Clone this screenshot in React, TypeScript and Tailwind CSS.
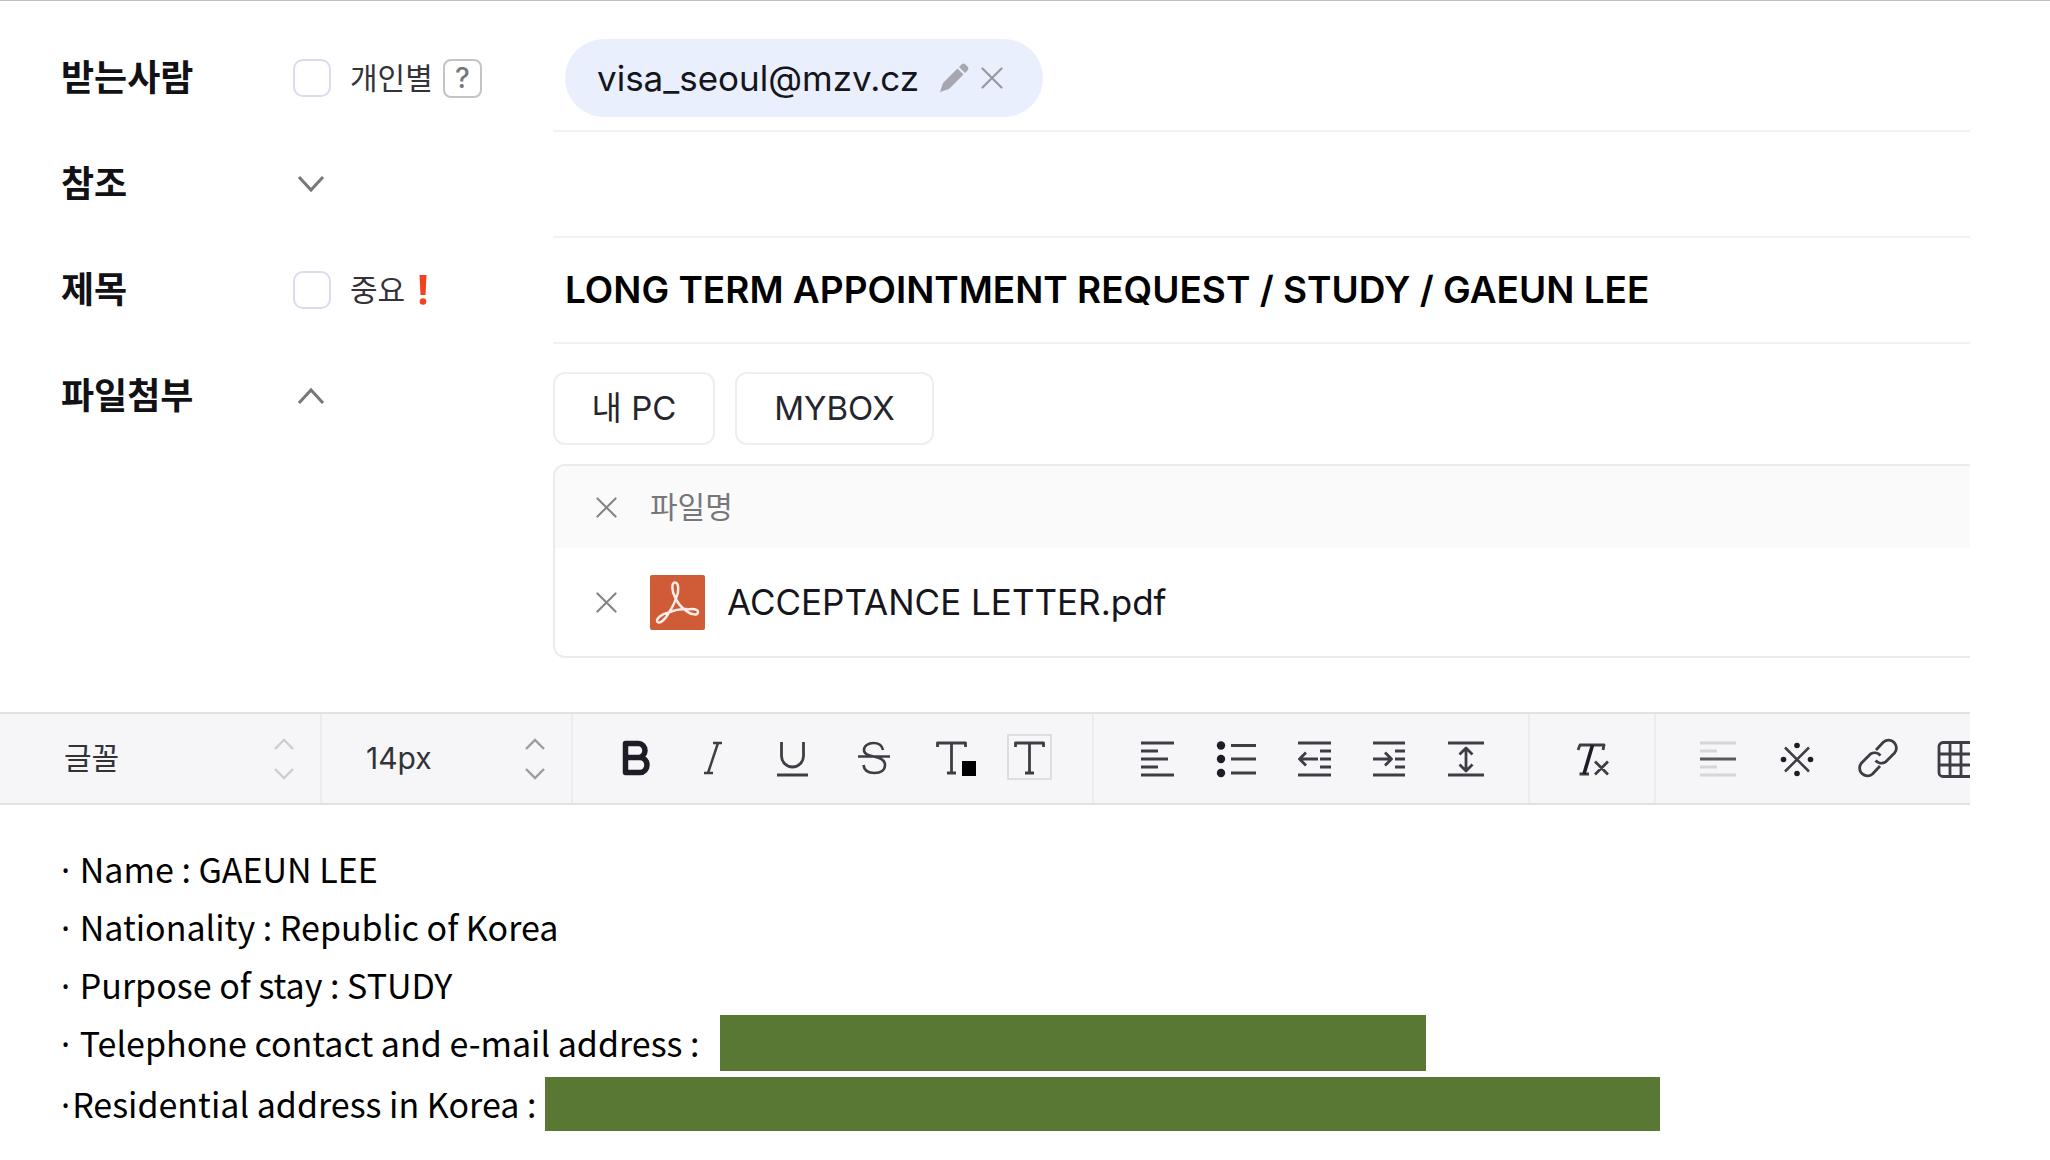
import type { ReactNode } from "react"

const ICON = "#3d3d46"

function ToolIcon({ label, children }: { label: string; children: ReactNode }) {
  return (
    <button type="button" aria-label={label} className="shrink-0">
      <svg
        width="56"
        height="44"
        viewBox="0 0 56 44"
        fill="none"
        stroke={ICON}
        strokeWidth="2.8"
        strokeLinejoin="round"
        className="block overflow-visible"
      >
        {children}
      </svg>
    </button>
  )
}

function Close({ size, color }: { size: number; color: string }) {
  return (
    <svg width={size} height={size} viewBox="0 0 22 22" fill="none" stroke={color} strokeWidth="2.2" strokeLinecap="round">
      <path d="M1.5 1.5l19 19M20.5 1.5l-19 19" />
    </svg>
  )
}

function Chevron({ up = false }: { up?: boolean }) {
  return (
    <svg width="28" height="18" viewBox="0 0 28 18" fill="none" stroke="#77777a" strokeWidth="3">
      <path d={up ? "M2 16L14 3l12 13" : "M2 2l12 13L26 2"} />
    </svg>
  )
}

function Spinner({ color }: { color: string }) {
  return (
    <svg width="20" height="42" viewBox="0 0 20 42" fill="none" stroke={color} strokeWidth="2.4" className="pointer-events-none">
      <path d="M1 11l9-9 9 9M1 31l9 9 9-9" />
    </svg>
  )
}

function Row({ label, htmlFor, option, children }: { label: string; htmlFor?: string; option: ReactNode; children?: ReactNode }) {
  return (
    <div className="grid h-[106px] grid-cols-[232px_260px_1fr]">
      <label htmlFor={htmlFor} className="flex items-center pb-0.5 text-4xl font-bold text-[#111116]">
        {label}
      </label>
      <div className="flex items-center pb-0.5">{option}</div>
      <div className="flex items-center border-b-2 border-[#f1f1f2] pl-3">{children}</div>
    </div>
  )
}

function Check({ id, label }: { id: string; label: string }) {
  return (
    <label htmlFor={id} className="flex items-center gap-[19px] text-[30px] text-[#333339]">
      <input id={id} type="checkbox" className="size-[38px] appearance-none rounded-[10px] border-2 border-[#d9dcec] bg-white" />
      {label}
    </label>
  )
}

function Line({ text }: { text: string }) {
  return (
    <p className="shrink-0 whitespace-pre">
      <span className="mr-0.5 font-['Noto_Sans',sans-serif] leading-none">·</span>
      {text}
    </p>
  )
}

const lines = [" Name : GAEUN LEE", " Nationality : Republic of Korea", " Purpose of stay : STUDY"]

export default function App() {
  return (
    <div className="min-h-screen border-t border-[#bdbdbf] bg-white font-['Inter','Noto_Sans_CJK_KR',sans-serif]">
      <main className="mr-20 overflow-hidden pt-[25px]">
        <form className="pl-[61px]">
          <Row
            label="받는사람"
            htmlFor="to"
            option={
              <>
                <Check id="each" label="개인별" />
                <button type="button" className="ml-2.5 size-[39px] rounded-lg border-2 border-[#c4c4c6] text-[28px] leading-none font-medium text-[#77777a]">
                  ?
                </button>
              </>
            }
          >
            <div className="flex h-[78px] items-center rounded-full bg-[#e9effc] pr-10 pl-8">
              <span className="text-[35px] text-[#15151b]">visa_seoul@mzv.cz</span>
              <button type="button" aria-label="수정" className="ml-5">
                <svg width="30" height="30" viewBox="0 0 30 30" fill="#a6a8ad">
                  <path d="M1 29l3-9L18.500 5.500l6 6L10 26z" />
                  <path d="M20 4l2.500-2.500a3 3 0 0 1 4 0l2 2a3 3 0 0 1 0 4L26 10z" />
                </svg>
              </button>
              <button type="button" aria-label="삭제" className="ml-3">
                <Close size={22} color="#98999e" />
              </button>
            </div>
            <input id="to" className="min-w-0 flex-1 outline-none" />
          </Row>

          <Row
            label="참조"
            htmlFor="cc"
            option={
              <button type="button" aria-label="펼치기" className="ml-1">
                <Chevron />
              </button>
            }
          >
            <input id="cc" className="w-full text-[35px] outline-none" />
          </Row>

          <Row
            label="제목"
            htmlFor="subject"
            option={
              <>
                <Check id="important" label="중요" />
                <svg width="8" height="30" viewBox="0 0 8 30" fill="#f0431e" className="ml-3.5">
                  <path d="M0.500 0h7l-1 20h-5z" />
                  <circle cx="4" cy="26.500" r="3.300" />
                </svg>
              </>
            }
          >
            <input
              id="subject"
              defaultValue="LONG TERM APPOINTMENT REQUEST / STUDY / GAEUN LEE"
              className="w-full text-[37px] font-semibold text-black outline-none"
            />
          </Row>

          <div className="grid grid-cols-[232px_260px_1fr]">
            <span className="flex h-[106px] items-center pb-0.5 text-4xl font-bold text-[#111116]">파일첨부</span>
            <div className="flex h-[106px] items-center pb-0.5">
              <button type="button" aria-label="접기" className="ml-1">
                <Chevron up />
              </button>
            </div>
            <div className="pt-7">
              <div className="flex gap-5 text-[33px] text-[#25252e]">
                <button type="button" className="h-[73px] w-[162px] rounded-xl border-2 border-[#eeeeef]">
                  내 PC
                </button>
                <button type="button" className="h-[73px] w-[199px] rounded-xl border-2 border-[#eeeeef]">
                  MYBOX
                </button>
              </div>
              <table className="mt-[19px] block overflow-hidden rounded-l-xl border-2 border-r-0 border-[#ebebee]">
                <thead className="block bg-[#fafafa]">
                  <tr className="flex h-[82px] items-center pl-[41px]">
                    <th className="w-[54px] text-left">
                      <button type="button" aria-label="모두 삭제" className="block">
                        <Close size={21} color="#858588" />
                      </button>
                    </th>
                    <th className="text-[30px] font-normal text-[#77777a]">파일명</th>
                  </tr>
                </thead>
                <tbody className="block">
                  <tr className="flex h-[108px] items-center pl-[41px]">
                    <td className="w-[54px]">
                      <button type="button" aria-label="파일 삭제" className="block">
                        <Close size={21} color="#858588" />
                      </button>
                    </td>
                    <td className="flex items-center gap-[22px] text-[35px] text-[#15151b]">
                      <svg width="55" height="55" viewBox="0 0 55 55" fill="none" stroke="#fbeee8" strokeWidth="2.500">
                        <rect width="55" height="55" rx="2" fill="#cf5c36" stroke="none" />
                        {/* three loops joined by a thin triangle */}
                        <path
                          d="M25 22c-3-5-4-14.500 0-14.500s4 9.500 1.500 14.500c-1.500 5-4 10-7.500 15.500M25 22c2.500 6.500 7 11 12 14.500M19 37.500c4-2 11-3.500 18-3.500M19 37.500c-3 6-8.500 11.500-11.500 9.500-2.500-2.500 4-8.500 11.500-9.500zM37 34.500c5-1 11-.5 11 2.500 0 4-7 2.500-11-.5z"
                          strokeLinejoin="round"
                        />
                      </svg>
                      ACCEPTANCE LETTER.pdf
                    </td>
                  </tr>
                </tbody>
              </table>
            </div>
          </div>
        </form>

        <div className="mt-[54px] flex h-[93px] border-y-2 border-[#e2e2e5] bg-[#f6f6f9] text-[#333337]">
          <label className="flex w-[322px] shrink-0 items-center border-r-2 border-[#ececef] pr-[26px] pl-16">
            <select aria-label="글꼴" className="flex-1 appearance-none text-[30px] outline-none">
              <option>글꼴</option>
            </select>
            <Spinner color="#cdcdd0" />
          </label>
          <label className="flex w-[251px] shrink-0 items-center border-r-2 border-[#ececef] pr-[26px] pl-11">
            <select aria-label="글자 크기" className="flex-1 appearance-none text-[30px] outline-none">
              <option>14px</option>
            </select>
            <Spinner color="#9c9ca0" />
          </label>

          <div className="flex shrink-0 items-center gap-[22px] border-r-2 border-[#ececef] pr-[38px] pl-[35px]">
            <ToolIcon label="굵게">
              <path stroke="#1d1d28" strokeWidth="5.500" d="M17.500 6.500h13a6.500 7 0 0 1 0 14h-13zM17.500 20.500h14.500a7 7.500 0 0 1 0 15h-14.500z" />
            </ToolIcon>
            <ToolIcon label="기울임">
              <path strokeWidth="2.500" d="M27 6h9M18 36h9M32 6L22 36" />
            </ToolIcon>
            <ToolIcon label="밑줄">
              <path d="M17.500 5v14a11 11 0 0 0 22 0V5M13 38h31" />
            </ToolIcon>
            <ToolIcon label="취소선">
              <path d="M41 13c-1-5-5-7-9.500-7-5.500 0-9.500 3-9.500 7 0 9 21 4 21 15 0 5-4 8-10.500 8S22 33 21.500 28M16 19.500h32" strokeWidth="2.600" />
            </ToolIcon>
            <ToolIcon label="글자색">
              <path d="M17.500 10V6h28v4M31.500 6v30M27 36h9" />
              <rect x="42" y="24" width="14" height="15" fill="#000" stroke="none" />
            </ToolIcon>
            <ToolIcon label="배경색">
              <rect x="10" y="-2" width="43" height="44" stroke="#dedee1" strokeWidth="2" />
              <path d="M17.500 10V6h28v4M31.500 6v30M27 36h9" />
            </ToolIcon>
          </div>

          <div className="flex shrink-0 items-center gap-[22px] border-r-2 border-[#ececef] pr-[30px] pl-9">
            <ToolIcon label="정렬">
              <path d="M11 6h33M11 14h17M11 22h27M11 30h17M11 38h33" />
            </ToolIcon>
            <ToolIcon label="목록">
              <path d="M23 8.500h25M23 22h25M23 36h25" />
              <g fill="#1d1d28" stroke="none">
                <circle cx="13" cy="8.500" r="4.200" />
                <circle cx="13" cy="22" r="4.200" />
                <circle cx="13" cy="36" r="4.200" />
              </g>
            </ToolIcon>
            <ToolIcon label="내어쓰기">
              <path d="M12 6h33M34 14h11M34 22h11M34 30h11M12 38h33M32 22H14M20 15.500L13.500 22l6.500 6.500" />
            </ToolIcon>
            <ToolIcon label="들여쓰기">
              <path d="M9 6h32M31 14h10M31 22h10M31 30h10M9 38h32M9 22h18M21 15.500l6.500 6.500-6.500 6.500" />
            </ToolIcon>
            <ToolIcon label="줄간격">
              <path d="M6 6h36M6 38h36M24 11v23M17.500 17.500L24 11l6.500 6.500M17.500 27.500L24 34l6.500-6.500" />
            </ToolIcon>
          </div>

          <div className="flex shrink-0 items-center border-r-2 border-[#ececef] pr-[34px] pl-[34px]">
            <ToolIcon label="서식 지우기">
              <path d="M14 13l2-5h24l-1 5M15.500 37H25M31 24.500l13 13M44 24.500l-13 13" />
              <path d="M28.500 8L20 37" stroke="#1d1d28" strokeWidth="3.600" />
            </ToolIcon>
          </div>

          <div className="flex items-center gap-[22px] pl-[34px]">
            <ToolIcon label="구분선">
              <path d="M10 6h36M10 14h17M10 30h17M10 38h36" stroke="#d6d6d9" />
              <path d="M10 22h36" stroke="#58585f" />
            </ToolIcon>
            <ToolIcon label="특수문자">
              <path d="M17 10.500l24 24M41 10.500l-24 24" strokeWidth="2.500" />
              <g fill="#1d1d28" stroke="none">
                <circle cx="15.500" cy="22.500" r="2.800" />
                <circle cx="42.500" cy="22.500" r="2.800" />
                <circle cx="29" cy="8.500" r="2.800" />
                <circle cx="29" cy="36.500" r="2.800" />
              </g>
            </ToolIcon>
            <ToolIcon label="링크">
              <path d="M30 13l7.500-8a7.800 7.800 0 0 1 11 11l-9 9a8 8 0 0 1-10-1.500M34 29l-7.500 8a7.800 7.800 0 0 1-11-11l9-9a8 8 0 0 1 10 1.500" />
            </ToolIcon>
            <ToolIcon label="표">
              <rect x="15" y="5.500" width="44" height="34" rx="4" />
              <path d="M26 5.500v34M37 5.500v34M48 5.500v34M15 17h44M15 28h44" />
            </ToolIcon>
          </div>
        </div>

        <div className="pt-[35px] pl-[61px] font-['Noto_Sans_CJK_KR',sans-serif] text-[34px] leading-[58px] text-black">
          {lines.map((line) => (
            <Line key={line} text={line} />
          ))}
          <div className="flex h-[58px] items-center">
            <div className="w-[659px] shrink-0">
              <Line text=" Telephone contact and e-mail address :" />
            </div>
            <div className="h-14 w-[706px] bg-[#587834]" />
          </div>
          <div className="mt-[3px] flex h-[58px] items-center">
            <div className="w-[484px] shrink-0">
              <Line text="Residential address in Korea :" />
            </div>
            <div className="h-[54px] w-[1115px] bg-[#587834]" />
          </div>
        </div>
      </main>
    </div>
  )
}
